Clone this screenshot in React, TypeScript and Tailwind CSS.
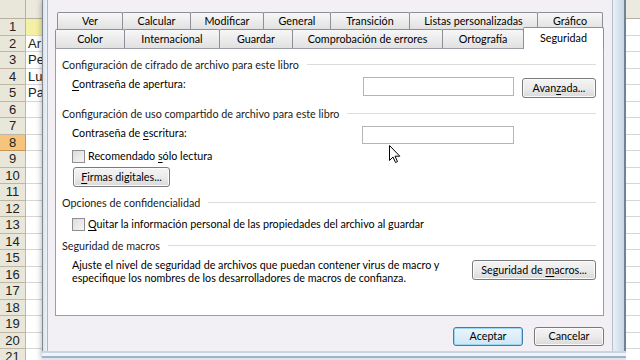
import React from 'react';

const rows = Array.from({ length: 21 }, (_, i) => i + 1);
const cellText: Record<number, string> = { 2: 'Ar', 3: 'Pe', 4: 'Lu', 5: 'Pa' };

function ExcelLeft() {
  return (
    <div className="w-[42px] shrink-0 flex flex-col bg-white font-['Liberation_Sans',sans-serif] text-[13px] text-[#222]">
      <div className="h-[19px] shrink-0 flex border-b border-[#b6b09c]">
        <div className="w-[26px] bg-[#e9e6da] border-r border-[#b6b09c]" />
        <div className="flex-1 bg-[#ece9df]" />
      </div>
      {rows.map((r) => (
        <div key={r} className="h-[16.5px] shrink-0 flex">
          <div
            className={
              r === 8
                ? 'w-[26px] bg-[#f6c47c] border-r border-b border-[#c8964f] flex items-center justify-center leading-none'
                : 'w-[26px] bg-[#e9e6da] border-r border-b border-[#bdb7a3] flex items-center justify-center leading-none'
            }
          >
            {r}
          </div>
          <div
            className={
              r === 1
                ? 'flex-1 bg-[#f4f0a6] border-b border-[#d6d6d6]'
                : 'flex-1 border-b border-[#d6d6d6] pl-[2px] leading-none flex items-center overflow-hidden whitespace-nowrap'
            }
          >
            {cellText[r] ?? ''}
          </div>
        </div>
      ))}
    </div>
  );
}

function ExcelRight() {
  return (
    <div className="flex-1 flex flex-col bg-white">
      <div className="h-[19px] shrink-0 bg-[#ece9df] border-b border-[#b6b09c]" />
      {rows.map((r) => (
        <div key={r} className="h-[16.5px] shrink-0 border-b border-[#d6d6d6]" />
      ))}
    </div>
  );
}

function Tab({ label, w, h, first }: { label: string; w: string; h: string; first?: boolean }) {
  return (
    <div
      className={`${w} ${h} ${first ? '' : '-ml-px'} shrink-0 border-t border-l border-r border-[#8e9097] rounded-t-[2px] bg-gradient-to-b from-[#f7f7f7] to-[#e1e1e1] flex items-center justify-center text-[10.75px] leading-none text-black`}
    >
      {label}
    </div>
  );
}

function Btn({ children, className }: { children: React.ReactNode; className: string }) {
  return (
    <div
      className={`${className} shrink-0 border border-[#7a7a7a] rounded-[3px] bg-gradient-to-b from-[#f4f4f4] via-[#ebebeb] to-[#d9d9d9] flex items-center justify-center text-[10.75px] leading-none text-black shadow-[inset_0_0_0_1px_#fbfbfb]`}
    >
      {children}
    </div>
  );
}

function GroupHeader({ label, mt }: { label: string; mt: string }) {
  return (
    <div className={`${mt} h-[15px] flex items-center pl-[6px] pr-[7px]`}>
      <span className="leading-[15px] text-[#1a1a1a] whitespace-nowrap">{label}</span>
      <div className="flex-1 h-px bg-[#dcdcdc] ml-[8px]" />
    </div>
  );
}

function CheckBox() {
  return (
    <div className="w-[13px] h-[13px] shrink-0 border border-[#8f8f8f] bg-gradient-to-br from-[#dcdcdc] to-[#f6f6f6]" />
  );
}

function Cursor() {
  return (
    <svg className="absolute left-[389px] top-[145px]" width="12" height="19" viewBox="0 0 12 19">
      <path
        d="M0.5 0.5 L0.5 15.5 L4 12 L6.5 17.5 L8.5 16.6 L6 11.2 L10.8 11.2 Z"
        fill="#ffffff"
        stroke="#000000"
        strokeWidth="1"
        strokeLinejoin="round"
      />
    </svg>
  );
}

export default function App() {
  return (
    <div className="relative w-[640px] h-[360px] flex overflow-hidden bg-white font-['Lato',sans-serif]">
      <ExcelLeft />

      {/* dialog window */}
      <div className="w-[584px] shrink-0 flex flex-col shadow-[0_0_6px_rgba(0,0,0,0.35)]">
        <div className="flex-1 flex">
          {/* left frame */}
          <div className="w-[6px] flex">
            <div className="w-px bg-[#7f8893]" />
            <div className="flex-1 bg-gradient-to-r from-[#d8e3ee] to-[#eef3f8]" />
            <div className="w-px bg-[#a9b5c2]" />
          </div>

          <div className="w-[564px] bg-[#f3f0f5] pt-[12px] flex flex-col">
            {/* tab strip */}
            <div className="flex ml-[9px] h-[17px]">
              <Tab label="Ver" w="w-[66px]" h="h-[17px]" first />
              <Tab label="Calcular" w="w-[69px]" h="h-[17px]" />
              <Tab label="Modificar" w="w-[74px]" h="h-[17px]" />
              <Tab label="General" w="w-[68px]" h="h-[17px]" />
              <Tab label="Transición" w="w-[80px]" h="h-[17px]" />
              <Tab label="Listas personalizadas" w="w-[129px]" h="h-[17px]" />
              <Tab label="Gráfico" w="w-[66px]" h="h-[17px]" />
            </div>
            <div className="flex ml-[7px] h-[19px] items-start">
              <Tab label="Color" w="w-[70px]" h="h-[19px]" first />
              <Tab label="Internacional" w="w-[96px]" h="h-[19px]" />
              <Tab label="Guardar" w="w-[74px]" h="h-[19px]" />
              <Tab label="Comprobación de errores" w="w-[151px]" h="h-[19px]" />
              <Tab label="Ortografía" w="w-[82px]" h="h-[19px]" />
              <div className="relative z-10 -ml-px -mt-[2px] w-[81px] h-[22px] shrink-0 border-t border-l border-r border-[#8e9097] rounded-t-[2px] bg-white flex items-start justify-center pt-[5px] text-[10.75px] leading-none text-black">
                Seguridad
              </div>
            </div>

            {/* panel */}
            <div className="ml-[7px] w-[549px] h-[268px] border border-[#9c9ea6] bg-white flex flex-col text-[10.75px] text-black">
              <GroupHeader label="Configuración de cifrado de archivo para este libro" mt="mt-[8px]" />
              <div className="mt-[4px] flex items-start pl-[16px]">
                <span className="w-[291px] leading-[15px]">
                  <u className="underline-offset-2">C</u>ontraseña de apertura:
                </span>
                <div className="mt-[1px] w-[151px] h-[19px] border border-[#b3b5b9] bg-white" />
                <Btn className="ml-[8px] mt-[2px] w-[74px] h-[20px]">
                  <span>
                    Avan<u className="underline-offset-2">z</u>ada...
                  </span>
                </Btn>
              </div>

              <GroupHeader label="Configuración de uso compartido de archivo para este libro" mt="mt-[8px]" />
              <div className="mt-[4px] flex items-start pl-[16px]">
                <span className="w-[290px] leading-[15px]">
                  Contraseña de <u className="underline-offset-2">e</u>scritura:
                </span>
                <div className="mt-[1px] w-[152px] h-[18px] border border-[#b3b5b9] bg-white" />
              </div>
              <div className="mt-[4px] flex items-start pl-[16px]">
                <div className="mt-[2px]">
                  <CheckBox />
                </div>
                <span className="ml-[3px] leading-[15px]">
                  Recomendado <u className="underline-offset-2">s</u>ólo lectura
                </span>
              </div>
              <div className="mt-[4px] pl-[17px] flex">
                <Btn className="w-[97px] h-[20px]">
                  <span>
                    <u className="underline-offset-2">F</u>irmas digitales...
                  </span>
                </Btn>
              </div>

              <GroupHeader label="Opciones de confidencialidad" mt="mt-[8px]" />
              <div className="mt-[6px] flex items-start pl-[16px]">
                <div className="mt-[2px]">
                  <CheckBox />
                </div>
                <span className="ml-[3px] leading-[15px] whitespace-nowrap">
                  <u className="underline-offset-2">Q</u>uitar la información personal de las propiedades del archivo al
                  guardar
                </span>
              </div>

              <GroupHeader label="Seguridad de macros" mt="mt-[7px]" />
              <div className="mt-[5px] flex items-start justify-between pl-[16px] pr-[7px]">
                <p className="leading-[13px] whitespace-nowrap">
                  Ajuste el nivel de seguridad de archivos que puedan contener virus de macro y
                  <br />
                  especifique los nombres de los desarrolladores de macros de confianza.
                </p>
                <Btn className="mt-[2px] w-[124px] h-[20px]">
                  <span>
                    Seguridad de <u className="underline-offset-2">m</u>acros...
                  </span>
                </Btn>
              </div>
            </div>

            {/* bottom buttons */}
            <div className="ml-[7px] w-[549px] mt-[11px] flex justify-end gap-[11px]">
              <div className="w-[70px] h-[19px] border border-[#3c7fb1] rounded-[3px] bg-gradient-to-b from-[#eaf6fd] to-[#cfe6f4] shadow-[inset_0_0_0_1px_#9ed6f2] flex items-center justify-center text-[10.75px] leading-none text-black">
                Aceptar
              </div>
              <Btn className="w-[70px] h-[19px]">Cancelar</Btn>
            </div>
          </div>

          {/* right frame */}
          <div className="w-[14px] flex">
            <div className="w-px bg-[#b5bfca]" />
            <div className="flex-1 bg-gradient-to-r from-[#e9f0f7] to-[#c9d7e5]" />
            <div className="w-[2px] bg-[#6f8394]" />
          </div>
        </div>
        {/* bottom frame */}
        <div className="h-[9px] shrink-0 flex flex-col">
          <div className="h-[2px] bg-[#c9d5e2]" />
          <div className="h-[3px] bg-[#eef4fa]" />
          <div className="h-[2px] bg-[#9fb3c6]" />
          <div className="flex-1 bg-[#dde6ef]" />
        </div>
      </div>

      <ExcelRight />
      <Cursor />
    </div>
  );
}
